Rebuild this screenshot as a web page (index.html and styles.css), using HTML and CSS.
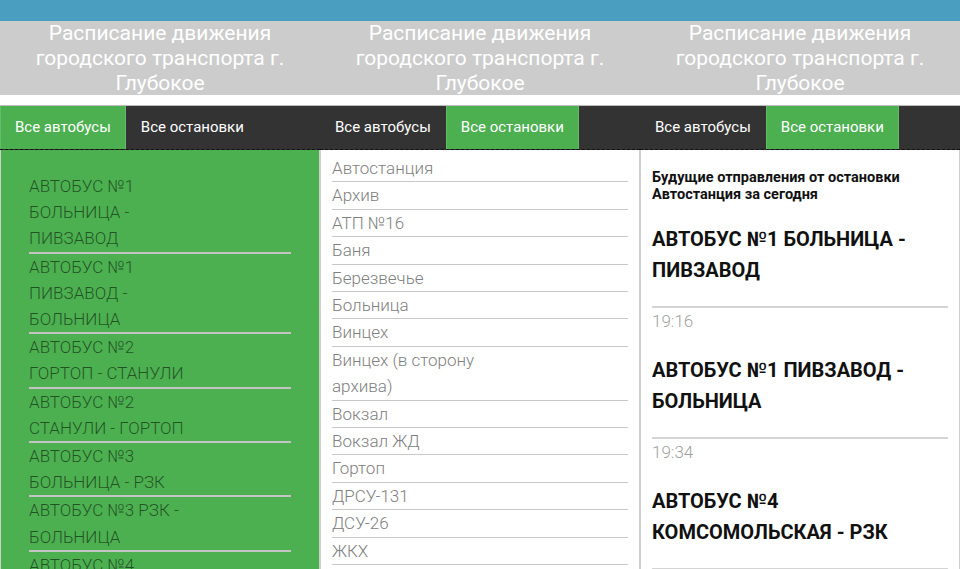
FILE: index.html
```html
<!DOCTYPE html>
<html lang="ru">
<head>
<meta charset="utf-8">
<title>Расписание движения городского транспорта г. Глубокое</title>
<link rel="stylesheet" href="styles.css">
</head>
<body>
<div class="screens">
  <section class="screen">
    <div class="topbar"></div>
    <header class="title">Расписание движения городского транспорта г. Глубокое</header>
    <nav class="tabs">
      <span class="tab active">Все автобусы</span>
      <span class="tab">Все остановки</span>
    </nav>
    <div class="panel panel-green">
      <ul class="routes">
        <li><span>АВТОБУС №1 БОЛЬНИЦА - ПИВЗАВОД</span></li>
        <li><span>АВТОБУС №1 ПИВЗАВОД - БОЛЬНИЦА</span></li>
        <li><span>АВТОБУС №2 ГОРТОП - СТАНУЛИ</span></li>
        <li><span>АВТОБУС №2 СТАНУЛИ - ГОРТОП</span></li>
        <li><span>АВТОБУС №3 БОЛЬНИЦА - РЗК</span></li>
        <li><span>АВТОБУС №3 РЗК - БОЛЬНИЦА</span></li>
        <li><span>АВТОБУС №4 КОМСОМОЛЬСКАЯ - РЗК</span></li>
      </ul>
    </div>
  </section>
  <section class="screen">
    <div class="topbar"></div>
    <header class="title">Расписание движения городского транспорта г. Глубокое</header>
    <nav class="tabs">
      <span class="tab">Все автобусы</span>
      <span class="tab active">Все остановки</span>
    </nav>
    <div class="panel panel-white">
      <ul class="stops">
        <li>Автостанция</li>
        <li>Архив</li>
        <li>АТП №16</li>
        <li>Баня</li>
        <li>Березвечье</li>
        <li>Больница</li>
        <li>Винцех</li>
        <li><span class="wrap">Винцех (в сторону архива)</span></li>
        <li>Вокзал</li>
        <li>Вокзал ЖД</li>
        <li>Гортоп</li>
        <li>ДРСУ-131</li>
        <li>ДСУ-26</li>
        <li>ЖКХ</li>
        <li>Заводская</li>
      </ul>
    </div>
  </section>
  <section class="screen">
    <div class="topbar"></div>
    <header class="title">Расписание движения городского транспорта г. Глубокое</header>
    <nav class="tabs">
      <span class="tab">Все автобусы</span>
      <span class="tab active">Все остановки</span>
    </nav>
    <div class="panel panel-white">
      <div class="departures">
        <h4 class="dep-title">Будущие отправления от остановки Автостанция за сегодня</h4>
        <h2 class="route">АВТОБУС №1 БОЛЬНИЦА - ПИВЗАВОД</h2>
        <div class="time">19:16</div>
        <h2 class="route">АВТОБУС №1 ПИВЗАВОД - БОЛЬНИЦА</h2>
        <div class="time">19:34</div>
        <h2 class="route">АВТОБУС №4 КОМСОМОЛЬСКАЯ - РЗК</h2>
        <div class="time">19:50</div>
      </div>
    </div>
  </section>
</div>
</body>
</html>
```

FILE: styles.css
```css
* { box-sizing: border-box; }
html, body {
  margin: 0;
  padding: 0;
  background: #fff;
  overflow: hidden;
  font-family: Roboto, "Liberation Sans", "Noto Sans", sans-serif;
}
.screens {
  display: grid;
  grid-template-columns: 320px 320px 320px;
  height: 569px;
  overflow: hidden;
}
.screen {
  display: flex;
  flex-direction: column;
  height: 569px;
  overflow: hidden;
}
.topbar {
  height: 21px;
  background: #4a9ec0;
  flex: none;
}
.title {
  flex: none;
  background: #cccccc;
  color: #fff;
  font-size: 21px;
  line-height: 25px;
  text-align: center;
  padding: 0 16px;
  height: 74px;
}
.tabs {
  flex: none;
  margin-top: 10px;
  height: 45px;
  background: #333333;
  border-top: 1px solid #bdbdbd;
  border-bottom: 1px dashed #111;
  display: flex;
}
.tab {
  color: #fff;
  font-size: 15px;
  line-height: 43px;
  padding: 0 15px;
}
.tab.active {
  background: #4caf50;
  box-shadow: inset 1px 0 0 #66bb6a, inset -1px 0 0 #66bb6a;
}
.panel {
  flex: 1;
  border-left: 1px solid #cfcfcf;
  border-right: 1px solid #cfcfcf;
}
.panel-green { background: #4caf50; }
.panel-white { background: #fff; }
ul {
  list-style: none;
  margin: 0;
  padding: 0;
}
.routes {
  padding: 23px 28px 0;
}
.routes li {
  font-size: 17px;
  font-weight: 300;
  line-height: 26.2px;
  color: rgba(0, 0, 0, 0.55);
  border-bottom: 2px solid #c4c4c4;
}
.routes li span {
  display: block;
  max-width: 170px;
}
.stops {
  padding: 5px 11px 0;
}
.stops li {
  font-size: 17px;
  font-weight: 300;
  line-height: 26.4px;
  color: #808080;
  border-bottom: 1px solid #c8c8c8;
}
.stops .wrap {
  display: block;
  max-width: 160px;
}
.departures {
  padding: 19px 11px 0;
}
.dep-title {
  margin: 0;
  font-size: 14.5px;
  font-weight: 700;
  line-height: 17px;
  color: #111;
}
.route {
  margin: 21px 0 0;
  font-size: 20px;
  font-weight: 700;
  line-height: 31px;
  color: #111;
  padding-bottom: 20px;
  border-bottom: 2px solid #d4d4d4;
}
.time {
  font-size: 17px;
  font-weight: 300;
  line-height: 26px;
  color: #a0a0a0;
}
```
